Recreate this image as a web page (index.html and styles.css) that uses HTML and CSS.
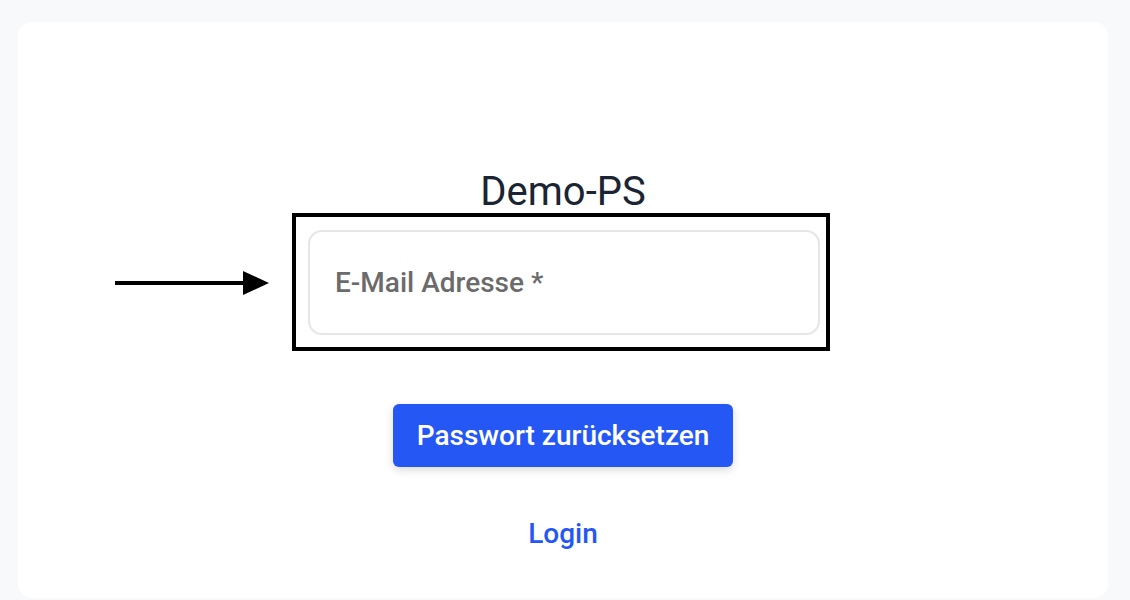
FILE: index.html
```html
<!DOCTYPE html>
<html>
<head>
  <meta charset="utf-8">
  <title>Demo-PS - Passwort zurücksetzen</title>
  <meta name="viewport" content="width=device-width, initial-scale=1.0">
  <link rel="stylesheet" href="styles.css">
</head>
<body>
  <div class="card">
    <h1 class="title">Demo-PS</h1>
    <div class="highlight">
      <svg class="arrow" width="154" height="26" viewBox="0 0 154 26">
        <rect x="0" y="11" width="130" height="4" fill="#000"/>
        <polygon points="128,1 154,13 128,25" fill="#000"/>
      </svg>
      <div class="field">
        <span class="field-label">E-Mail Adresse *</span>
      </div>
    </div>
    <button class="reset-button">Passwort zurücksetzen</button>
    <a class="login-link" href="#">Login</a>
  </div>
</body>
</html>
```

FILE: styles.css
```css
    body {
      margin: 0;
      background-color: #f8f9fb;
      font-family: Roboto, "Liberation Sans", sans-serif;
    }
    .card {
      margin: 22px 22px 0 18px;
      height: 576px;
      box-sizing: border-box;
      padding-top: 149px;
      background-color: #fff;
      border-radius: 14px;
      display: flex;
      flex-direction: column;
      align-items: center;
    }
    .title {
      margin: 0;
      font-size: 40px;
      line-height: 42px;
      font-weight: 400;
      color: #1a2433;
    }
    .highlight {
      position: relative;
      border: 4px solid #000;
      padding: 13px 6px 12px 12px;
      margin-right: 4px;
    }
    .arrow {
      position: absolute;
      left: -181px;
      top: 53px;
    }
    .field {
      width: 512px;
      height: 105px;
      box-sizing: border-box;
      border: 2px solid #e6e6e6;
      border-radius: 14px;
      padding-left: 25px;
      display: flex;
      align-items: center;
    }
    .field-label {
      font-size: 28px;
      font-weight: 500;
      color: #6b6b6b;
    }
    .reset-button {
      margin-top: 53px;
      height: 63px;
      padding: 0 24px;
      background-color: #2557f5;
      color: #fff;
      font-family: inherit;
      font-size: 28px;
      font-weight: 500;
      border: none;
      border-radius: 6px;
      box-shadow: 0 3px 8px rgba(0, 0, 0, 0.15);
      cursor: pointer;
    }
    .login-link {
      margin-top: 52px;
      font-size: 28px;
      line-height: 30px;
      font-weight: 500;
      color: #2557f5;
      text-decoration: none;
    }
```
